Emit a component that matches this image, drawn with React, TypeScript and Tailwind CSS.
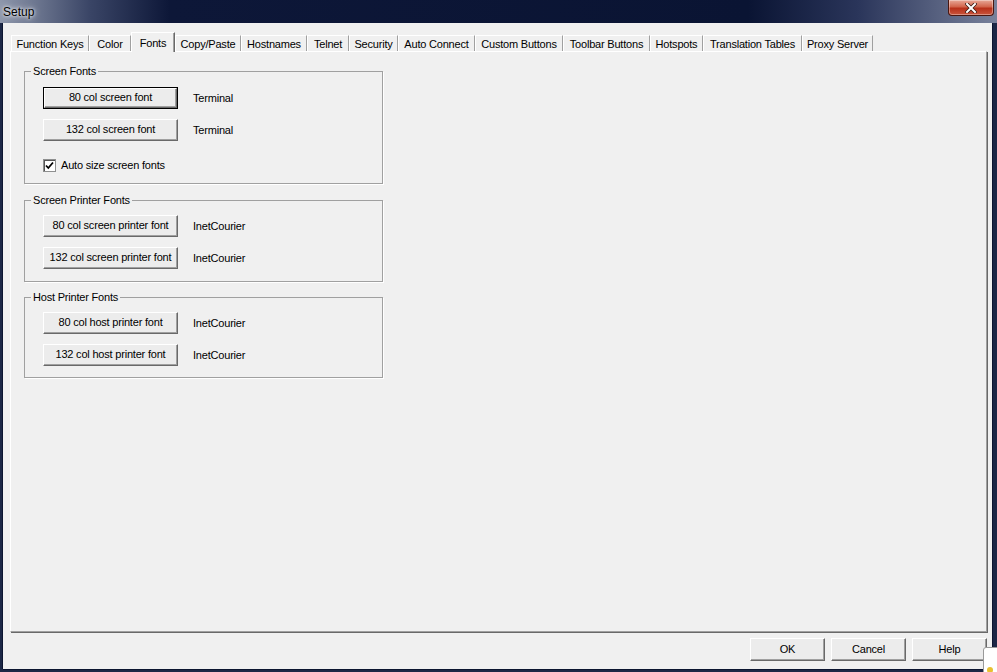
import React from "react";

const tabs = [
  { label: "Function Keys", w: "w-[78px]" },
  { label: "Color", w: "w-[42px]" },
  { label: "Fonts", w: "w-[44px]", active: true },
  { label: "Copy/Paste", w: "w-[66px]" },
  { label: "Hostnames", w: "w-[66px]" },
  { label: "Telnet", w: "w-[42px]" },
  { label: "Security", w: "w-[49px]" },
  { label: "Auto Connect", w: "w-[77px]" },
  { label: "Custom Buttons", w: "w-[88px]" },
  { label: "Toolbar Buttons", w: "w-[87px]" },
  { label: "Hotspots", w: "w-[53px]" },
  { label: "Translation Tables", w: "w-[99px]" },
  { label: "Proxy Server", w: "w-[71px]" },
];

// classic 3d push button
function Btn({
  children,
  isDefault,
  className = "",
}: {
  children: React.ReactNode;
  isDefault?: boolean;
  className?: string;
}) {
  const face = (
    <div className="flex h-full w-full items-center justify-center border-t border-l border-t-white border-l-white border-r border-b border-r-[#696969] border-b-[#696969] bg-[#ececec] pb-[1px] shadow-[inset_-1px_-1px_0_#a0a0a0]">
      {children}
    </div>
  );
  if (isDefault) {
    return (
      <div className={`border border-black ${className}`}>{face}</div>
    );
  }
  return <div className={className}>{face}</div>;
}

function FontRow({
  label,
  value,
  isDefault,
  className = "",
}: {
  label: string;
  value: string;
  isDefault?: boolean;
  className?: string;
}) {
  return (
    <div className={`flex items-center ${className}`}>
      <Btn isDefault={isDefault} className="h-[22px] w-[135px]">
        {label}
      </Btn>
      <span className="ml-[15px]">{value}</span>
    </div>
  );
}

function Group({
  title,
  children,
  className = "",
}: {
  title: string;
  children: React.ReactNode;
  className?: string;
}) {
  return (
    <fieldset
      className={`w-[359px] border border-[#a0a0a0] pl-[6px] shadow-[1px_1px_0_#ffffff] ${className}`}
    >
      <legend className="px-[2px] leading-[13px]">{title}</legend>
      <div className="ml-[12px]">{children}</div>
    </fieldset>
  );
}

export default function App() {
  return (
    <div className="relative flex h-[672px] w-[997px] flex-col overflow-hidden bg-[#1c2746] font-['Liberation_Sans',Arial,sans-serif] text-[11px] tracking-[-0.2px] text-black">
      {/* title bar */}
      <div className="relative h-[23px] shrink-0 bg-[linear-gradient(90deg,#8e97ab_0%,#3a4566_9%,#0d1738_17%,#0a1433_75%,#2a355a_86%,#78819b_100%)]">
        <span className="absolute left-[3px] top-[3px] text-[12px] tracking-normal [text-shadow:0_0_6px_#ffffff,0_0_3px_#ffffff]">
          Setup
        </span>
        <div className="absolute right-[3px] top-0 flex h-[16px] w-[46px] items-center justify-center rounded-b-[4px] border border-t-0 border-[#4a1710] bg-[linear-gradient(180deg,#e8a898_0%,#d2644c_45%,#b8301a_55%,#c9553d_100%)] shadow-[inset_0_0_0_1px_rgba(255,255,255,0.35)]">
          <svg width="12" height="10" viewBox="0 0 12 10">
            <path
              d="M2 1 L10 9 M10 1 L2 9"
              stroke="#3b1a14"
              strokeWidth="3.6"
              strokeLinecap="square"
            />
            <path
              d="M2 1 L10 9 M10 1 L2 9"
              stroke="#ffffff"
              strokeWidth="2"
              strokeLinecap="square"
            />
          </svg>
        </div>
      </div>

      {/* window body */}
      <div className="mb-[3px] ml-[3px] mr-[5px] flex flex-1 flex-col bg-[#f0f0f0] pl-[7px] pr-[5px] pt-[9px] shadow-[-1px_0_0_#0c1530,1px_0_0_#0c1530,0_1px_0_#0c1530]">
        {/* tabs */}
        <div className="flex h-[19px] shrink-0 items-end pl-[1px]">
          {tabs.map((t) =>
            t.active ? (
              <div
                key={t.label}
                className={`${t.w} relative z-10 -mb-px flex h-[20px] items-start justify-center border-t border-l border-t-white border-l-white border-r border-r-[#696969] bg-[#f0f0f0] pt-[2px] shadow-[inset_-1px_0_0_#a0a0a0]`}
              >
                {t.label}
              </div>
            ) : (
              <div
                key={t.label}
                className={`${t.w} flex h-[16px] items-center justify-center border-t border-l border-t-white border-l-white border-r border-r-[#a0a0a0] bg-[#f0f0f0] pt-[1px]`}
              >
                {t.label}
              </div>
            )
          )}
        </div>

        {/* tab panel */}
        <div className="flex flex-1 flex-col border-t border-l border-t-white border-l-white border-r border-b border-r-[#a0a0a0] border-b-[#a0a0a0] pl-[13px] pt-[13px] shadow-[1px_1px_0_#696969]">
          <Group title="Screen Fonts" className="pb-[11px]">
            <FontRow
              label="80 col screen font"
              value="Terminal"
              isDefault
              className="mt-[9px]"
            />
            <FontRow
              label="132 col screen font"
              value="Terminal"
              className="mt-[10px]"
            />
            <label className="mt-[18px] flex items-center leading-[13px]">
              <span className="flex h-[13px] w-[13px] items-center justify-center border border-[#8e8f8f] bg-white shadow-[inset_1px_1px_0_#555]">
                <svg width="9" height="9" viewBox="0 0 9 9">
                  <path
                    d="M1 4.5 L3.3 7 L8 1.5"
                    stroke="#000"
                    strokeWidth="1.8"
                    fill="none"
                  />
                </svg>
              </span>
              <span className="ml-[5px]">Auto size screen fonts</span>
            </label>
          </Group>

          <Group title="Screen Printer Fonts" className="mt-[10px] pb-[12px]">
            <FontRow
              label="80 col screen printer font"
              value="InetCourier"
              className="mt-[8px]"
            />
            <FontRow
              label="132 col screen printer font"
              value="InetCourier"
              className="mt-[10px]"
            />
          </Group>

          <Group title="Host Printer Fonts" className="mt-[9px] pb-[11px]">
            <FontRow
              label="80 col host printer font"
              value="InetCourier"
              className="mt-[8px]"
            />
            <FontRow
              label="132 col host printer font"
              value="InetCourier"
              className="mt-[10px]"
            />
          </Group>
        </div>

        {/* dialog buttons */}
        <div className="flex h-[37px] shrink-0 justify-end gap-[6px] pt-[6px]">
          <Btn className="h-[23px] w-[75px]">OK</Btn>
          <Btn className="h-[23px] w-[75px]">Cancel</Btn>
          <Btn className="h-[23px] w-[75px]">Help</Btn>
        </div>
      </div>

      {/* notification popup peeking in the corner */}
      <div className="absolute left-[983px] top-[647px] h-[30px] w-[20px] rounded-tl-[3px] border border-[#9a9a9a] bg-white">
        <div className="ml-[3px] mt-[19px] h-[6px] w-[6px] rounded-full bg-[#e8c030]" />
      </div>
    </div>
  );
}
